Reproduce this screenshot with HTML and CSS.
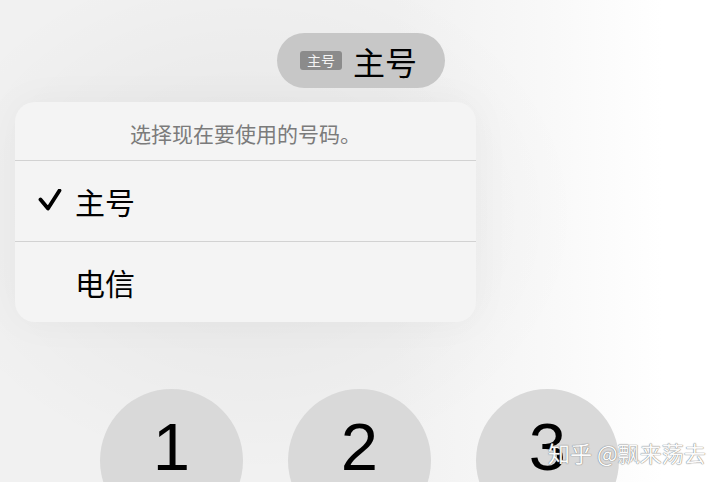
FILE: index.html
```html
<!DOCTYPE html>
<html lang="zh-CN">
<head>
<meta charset="utf-8">
<title>选择号码</title>
<link rel="stylesheet" href="styles.css">
</head>
<body>
<div class="screen">
  <div class="top">
    <button class="line-pill">
      <span class="line-badge">主号</span>
      <span class="line-name">主号</span>
    </button>
  </div>

  <div class="menu">
    <div class="menu-title">选择现在要使用的号码。</div>
    <div class="menu-item">
      <span class="check">
        <svg viewBox="0 0 24 24" width="24" height="24"><polyline points="2.5,10.5 10,19.5 21.5,1.5" fill="none" stroke="#000" stroke-width="3.8" stroke-linecap="round" stroke-linejoin="round"/></svg>
      </span>
      <span class="item-label">主号</span>
    </div>
    <div class="menu-item">
      <span class="check"></span>
      <span class="item-label">电信</span>
    </div>
  </div>

  <div class="keypad">
    <div class="key"><span class="digit">1</span></div>
    <div class="key"><span class="digit">2</span></div>
    <div class="key"><span class="digit">3</span></div>
  </div>

  <div class="watermark">知乎 @飘来荡去</div>
</div>
</body>
</html>
```

FILE: styles.css
```css
html, body {
  margin: 0;
  padding: 0;
}

body {
  width: 720px;
  height: 482px;
  overflow: hidden;
  font-family: "Noto Sans CJK SC", "Noto Sans", sans-serif;
}

.screen {
  position: relative;
  width: 720px;
  height: 482px;
  overflow: hidden;
  background:
    radial-gradient(ellipse 330px 260px at 250px 215px, rgba(0,0,0,0.05), rgba(0,0,0,0) 100%),
    linear-gradient(to right, #f1f1f1 0%, #f1f1f1 55%, #f8f8f8 75%, #ffffff 92%);
}

.top {
  display: flex;
  padding-top: 33px;
  padding-left: 277px;
}

.line-pill {
  display: flex;
  align-items: center;
  box-sizing: border-box;
  width: 168px;
  height: 55px;
  padding: 0 0 0 23px;
  border: none;
  border-radius: 28px;
  background: #c7c7c7;
  font-family: inherit;
  cursor: pointer;
}

.line-badge {
  display: flex;
  align-items: center;
  justify-content: center;
  width: 42px;
  height: 19px;
  border-radius: 3px;
  background: #8b8b8b;
  color: #f4f4f4;
  font-size: 14px;
  line-height: 19px;
}

.line-name {
  margin-left: 11px;
  font-size: 32px;
  line-height: 40px;
  color: #000;
}

.menu {
  box-sizing: border-box;
  width: 461px;
  margin: 14px 0 0 15px;
  background: #f4f4f4;
  border-radius: 20px;
  box-shadow: 0 0 40px rgba(0,0,0,0.04);
  overflow: hidden;
}

.menu-title {
  height: 59px;
  padding-top: 4px;
  box-sizing: border-box;
  display: flex;
  align-items: center;
  justify-content: center;
  font-size: 21px;
  color: #7b7b7b;
  border-bottom: 1px solid #d2d2d2;
}

.menu-item {
  display: flex;
  align-items: center;
  height: 80px;
  padding-left: 23px;
}

.menu-item + .menu-item {
  border-top: 1px solid #d2d2d2;
}

.check {
  display: flex;
  width: 24px;
  height: 24px;
  margin-right: 13px;
}

.item-label {
  font-size: 30px;
  color: #000;
  line-height: 40px;
}

.keypad {
  display: flex;
  gap: 45px;
  margin-top: 67px;
  padding-left: 100px;
}

.key {
  flex: none;
  width: 143px;
  height: 143px;
  border-radius: 50%;
  background: #d9d9d9;
  display: flex;
  justify-content: center;
}

.digit {
  margin-top: 23px;
  font-family: "Liberation Sans", Arial, sans-serif;
  font-size: 67px;
  line-height: 70px;
  color: #000;
}

/* site credit stamped over the bottom-right corner */
.watermark {
  position: absolute;
  left: 548px;
  top: 437px;
  font-size: 22px;
  line-height: 30px;
  color: #fbfbfb;
  text-shadow: 0 0 1px #7a7a7a, 0 0 1px #7a7a7a;
}
```
